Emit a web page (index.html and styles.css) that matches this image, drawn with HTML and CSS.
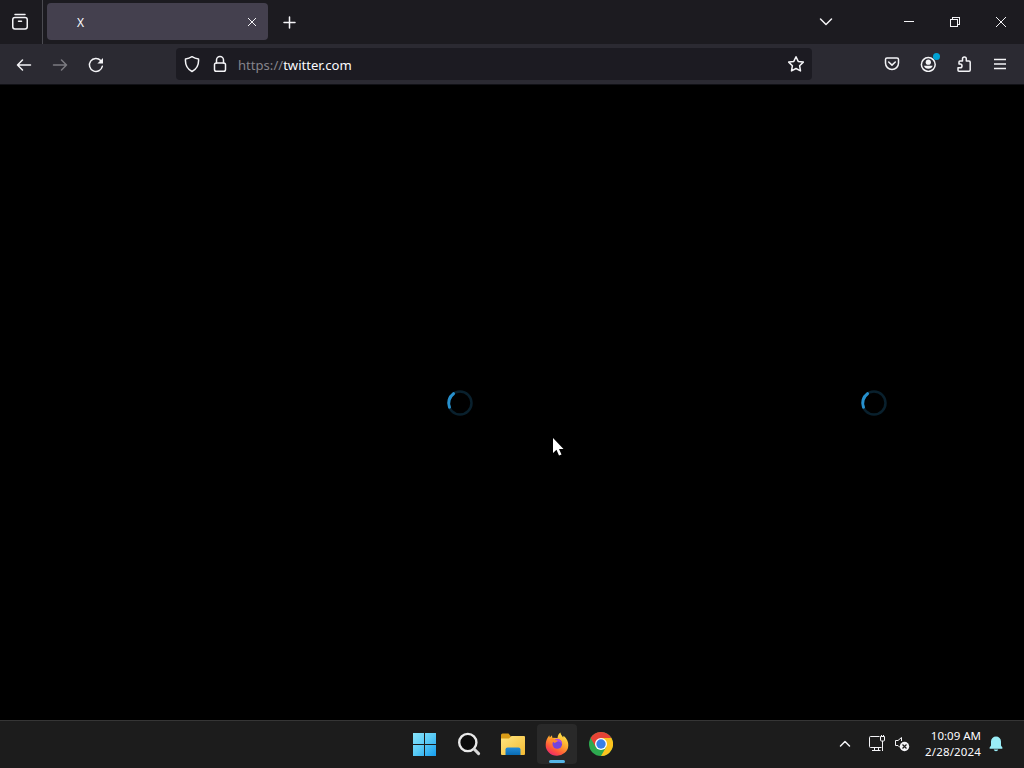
FILE: index.html
```html
<!DOCTYPE html>
<html lang="en">
<head>
<meta charset="utf-8">
<title>X</title>
<link rel="stylesheet" href="styles.css">
</head>
<body>
<div class="desktop">
  <header class="tabbar">
    <div class="view-button"><svg class="line" width="18" height="18" viewBox="0 0 18 18"><path d="M4 1.500h10"/><rect x="1.750" y="4.500" width="14.500" height="11.500" rx="2.200"/><path d="M7.500 8.200h3"/></svg></div>
    <div class="tab"><span class="tab-title">X</span><svg class="thin" width="10" height="10" viewBox="0 0 10 10"><path d="M1 1l8 8M9 1L1 9"/></svg></div>
    <div class="new-tab"><svg class="line" width="13" height="13" viewBox="0 0 13 13"><path d="M6.500 1v11M1 6.500h11"/></svg></div>
    <div class="spacer"></div>
    <div class="all-tabs"><svg class="line" width="14" height="10" viewBox="0 0 14 10"><path d="M1.500 2L7 7.500 12.500 2"/></svg></div>
    <div class="win"><svg class="crisp" width="10" height="10" viewBox="0 0 10 10"><path d="M0 4.500h10"/></svg></div>
    <div class="win"><svg class="crisp" width="10" height="10" viewBox="0 0 10 10"><path d="M.5 2.500h7v7h-7zM2.500 2.500v-2h7v7h-2"/></svg></div>
    <div class="win"><svg class="thin" width="10" height="10" viewBox="0 0 10 10"><path d="M0 0l10 10M10 0L0 10"/></svg></div>
  </header>
  <nav class="toolbar">
    <div class="tool"><svg class="line" width="16" height="16" viewBox="0 0 16 16"><path d="M14.500 8H1.500M6.500 3L1.500 8l5 5"/></svg></div>
    <div class="tool muted"><svg class="line" width="16" height="16" viewBox="0 0 16 16"><path d="M1.500 8h13M9.500 3l5 5-5 5"/></svg></div>
    <div class="tool"><svg class="line" width="16" height="16" viewBox="0 0 16 16"><path d="M14.300 9.300A6.500 6.500 0 1 1 12.700 3.500"/><path class="fill" d="M15 1v5.600H9.400z"/></svg></div>
    <div class="urlbar">
      <svg class="line shield" width="16" height="18" viewBox="0 0 16 18"><path d="M8 1.700C6 3 3.800 3.700 1.500 3.900C1 9.700 3.300 14.200 8 16.500C12.700 14.200 15 9.700 14.500 3.900C12.200 3.700 10 3 8 1.700z"/></svg>
      <svg class="line lock" width="14" height="18" viewBox="0 0 14 18"><rect x="1.500" y="8" width="11" height="8.200" rx="1.800"/><path d="M3.500 8V5a3.500 3.500 0 0 1 7 0v3"/></svg>
      <span class="url"><span class="scheme">https://</span>twitter.com</span>
      <svg class="line star" width="18" height="18" viewBox="0 0 18 18"><path d="M9 1.700l2.200 4.700 5.100.7-3.700 3.600.9 5.200L9 13.500l-4.500 2.400.9-5.200L1.700 7.100l5.100-.7z"/></svg>
    </div>
    <div class="actions">
      <div class="tool"><svg class="line" width="16" height="16" viewBox="0 0 16 16"><path d="M3 2h10q1.500 0 1.500 1.500V7a6.500 6.500 0 0 1-13 0V3.500Q1.500 2 3 2zM4.700 6L8 9.100 11.300 6"/></svg></div>
      <div class="tool account"><svg class="line" width="16" height="16" viewBox="0 0 16 16"><circle cx="8.300" cy="8.500" r="6.900"/><circle class="solid" cx="8.300" cy="6.200" r="2.600"/><path class="solid" d="M3.900 9.800h8.800a4.600 4.200 0 0 1-8.800 0z"/></svg><span class="badge"></span></div>
      <div class="tool"><svg class="line" width="16" height="18" viewBox="0 0 16 18"><path d="M3 16.200q-1 0-1-1V12.700h2.200a1.800 1.800 0 0 0 0-3.600H3V7q0-1 1-1h2.500V3.800a1.900 1.900 0 0 1 3.800 0V6h2.700q1.200 0 1.200 1.200v7.800q0 1.200-1.200 1.200z"/></svg></div>
      <div class="tool"><svg class="line menu" width="14" height="14" viewBox="0 0 14 14"><path d="M1 2.500h12M1 7h12M1 11.500h12"/></svg></div>
    </div>
  </nav>
  <main class="page">
    <div class="primary"><svg class="spinner" width="28" height="28" viewBox="0 0 28 28"><circle class="track" cx="14" cy="14" r="11.500"/><path class="arc" d="M7.500 4.700A11.500 11.500 0 0 0 3.500 18.200"/></svg></div>
    <div class="secondary"><svg class="spinner" width="28" height="28" viewBox="0 0 28 28"><circle class="track" cx="14" cy="14" r="11.500"/><path class="arc" d="M7.500 4.700A11.500 11.500 0 0 0 3.500 18.200"/></svg></div>
  </main>
  <footer class="taskbar">
    <div class="side"></div>
    <div class="apps">
      <div class="app start"><svg width="24" height="24" viewBox="0 0 24 24"><defs><linearGradient id="win" gradientUnits="userSpaceOnUse" x1="0" y1="0" x2="24" y2="24"><stop stop-color="#8be6fb"/><stop offset=".5" stop-color="#5bcbf5"/><stop offset="1" stop-color="#149df0"/></linearGradient></defs><path fill="url(#win)" d="M1 1h11v11H1zM13 1h11v11H13zM1 13h11v11H1zM13 13h11v11H13z"/></svg></div>
      <div class="app"><svg width="24" height="24" viewBox="0 0 24 24" fill="none"><circle cx="10.800" cy="10.500" r="8.600" fill="#0c0c0c" stroke="#e9e9e9" stroke-width="2.400"/><path d="M17.300 17.200l4.300 4.400" stroke="#d8d8d8" stroke-width="3" stroke-linecap="round"/></svg></div>
      <div class="app"><svg width="26" height="24" viewBox="0 0 26 24"><defs><linearGradient id="folder" x2="1" y2="1"><stop stop-color="#ffe681"/><stop offset="1" stop-color="#f4ba32"/></linearGradient><linearGradient id="pocket" x2="0" y2="1"><stop stop-color="#258bd8"/><stop offset="1" stop-color="#086cb4"/></linearGradient></defs><path fill="#d99b16" d="M1 3q0-1.500 1.500-1.500h6L11 4.500v5H1z"/><path fill="url(#folder)" d="M1 6.500h8l2.500-2.500H24q1 0 1 1v17q0 1-1 1H2q-1 0-1-1z"/><path fill="url(#pocket)" d="M5.500 23v-5.500q0-2 2-2h11q2 0 2 2V23z"/></svg></div>
      <div class="app active"><svg width="24" height="24" viewBox="0 0 24 24"><defs><linearGradient id="fox" x1=".8" y1="0" x2=".2" y2="1"><stop stop-color="#fff04b"/><stop offset=".45" stop-color="#ffa02c"/><stop offset=".75" stop-color="#ff523d"/><stop offset="1" stop-color="#e72278"/></linearGradient></defs><path fill="url(#fox)" d="M15.500.500c0 2.200 1.700 3 2.600 5l.5-1.700c3.500 2.800 4.900 6.300 4.700 9.700A11.300 10.500 0 0 1 .7 13C.600 9 2 6 4.300 3.200l.5 2.300L7 3.300l.3 2.500 5.200.2C12.800 3.600 13.600 1.800 15.500.500z"/><circle cx="12.300" cy="12" r="4.800" fill="#7544dd"/><path fill="#b34be0" d="M10 7.200a5 5 0 0 1 7 5c-1.500-2.500-3.500-3.100-5-2.300z"/><path fill="#ff8a2b" d="M4.500 7.500c2-1.900 4.200-1.500 5.500.5l2.700.5c-.3 1.500-2 1.500-3 2.500z"/></svg></div>
      <div class="app"><svg width="24" height="24" viewBox="0 0 24 24"><circle cx="12" cy="12" r="12" fill="#2da94f"/><path fill="#e74335" d="M1.600 6A12 12 0 0 1 22.400 6H12v6l-5.200 3z"/><path fill="#fcc31e" d="M22.400 6A12 12 0 0 1 12 24l5.200-9L12 6z"/><circle cx="12" cy="12" r="6" fill="#fff"/><circle cx="12" cy="12" r="4.700" fill="#377fe8"/></svg></div>
    </div>
    <div class="side tray">
      <svg class="line caret" width="12" height="8" viewBox="0 0 12 8"><path d="M1.500 6L6 1.500 10.500 6"/></svg>
      <svg class="thin network" width="17" height="17" viewBox="0 0 17 17"><path d="M10.500 1.500H1.500q-1 0-1 1v9q0 1 1 1h11M5.500 12.500v3M3 15.500h8.500M9.500 12.500v3M11.500 1.500h4v3.500q0 1-1 1h-2q-1 0-1-1zM12.500 0v1.500M14.500 0v1.500M13.500 6v10"/></svg>
      <svg class="thin volume" width="16" height="16" viewBox="0 0 16 16"><path d="M7.500 5V1.500L4 4.500H1.500v5H4l2 2"/><circle class="solid" cx="10.500" cy="10.500" r="4.700"/><path class="cross" d="M8.500 8.500l4 4M12.500 8.500l-4 4"/></svg>
      <div class="clock"><span>10:09 AM</span><span class="date">2/28/2024</span></div>
      <svg class="bell" width="14" height="16" viewBox="0 0 14 16"><path fill="#9aedf7" d="M7 .5a5 5 0 0 1 5 5v4l1.500 2.300q.3 1-.8 1H1.300q-1.100 0-.8-1L2 9.500v-4a5 5 0 0 1 5-5zM4.700 13.500h4.600a2.400 2.400 0 0 1-4.600 0z"/></svg>
    </div>
  </footer>
  <svg class="pointer" width="12" height="19" viewBox="0 0 12 19"><path fill="#fff" d="M1 0v15l3.500-3.200L7 17.500l2.500-1.100L7 11h4.500z"/></svg>
</div>
</body>
</html>
```

FILE: styles.css
```css
* { box-sizing: border-box; }
body { margin: 0; background: #000; font-family: "Noto Sans", sans-serif; color: #fbfbfe; }
svg { display: block; flex: none; }
.desktop { width: 1024px; height: 768px; display: flex; flex-direction: column; position: relative; overflow: hidden; }
.line, .thin, .crisp { fill: none; stroke: #f4f4f7; stroke-width: 1.5; stroke-linecap: round; stroke-linejoin: round; }
.thin, .crisp { stroke-width: 1; stroke-linecap: butt; }
.crisp { shape-rendering: crispEdges; stroke-linejoin: miter; }
.fill { fill: #f4f4f7; stroke: none; }
.solid { fill: #f4f4f7; stroke: none; }
.cross { stroke: #1c1c1c; stroke-width: 1.2; }
.tabbar { height: 44px; background: #1c1b20; display: flex; align-items: center; }
.view-button { width: 43px; height: 44px; padding-right: 3px; border-right: 1px solid #4b4b51; display: flex; align-items: center; justify-content: center; }
.tab { width: 221px; height: 37px; margin: 0 0 1px 4px; border-radius: 4px; background: #44404e; display: flex; align-items: center; justify-content: space-between; padding: 0 11px 0 30px; }
.tab-title { font-size: 12px; line-height: 16px; padding-top: 2px; }
.new-tab { width: 43px; display: flex; justify-content: center; padding-top: 1px; }
.spacer { flex: 1; }
.all-tabs { margin-right: 53px; }
.win { width: 46px; height: 44px; display: flex; align-items: center; justify-content: center; }
.toolbar { height: 41px; background: #2b2a32; border-bottom: 1px solid #111116; display: flex; align-items: center; padding: 1px 6px 0; }
.tool { width: 36px; height: 36px; display: flex; align-items: center; justify-content: center; }
.muted { opacity: .4; }
.actions { display: flex; margin-bottom: 2px; }
.urlbar { width: 636px; height: 32px; margin: 0 auto 1px 62px; border-radius: 4px; background: #1c1b22; display: flex; align-items: center; padding: 0 7px 0 8px; }
.lock { margin-left: 13px; }
.url { flex: 1; margin-left: 11px; font-size: 13.1px; line-height: 18px; padding-top: 1px; }
.scheme { color: #85848b; }
.account { position: relative; }
.badge { position: absolute; left: 23px; top: 7px; width: 7px; height: 7px; border-radius: 50%; background: #00a2d3; }
.menu { stroke-linecap: butt; }
.page { flex: 1; display: flex; background: #000; align-items: center; }
.primary { width: 667px; padding-left: 253px; display: flex; justify-content: center; }
.secondary { flex: 1; display: flex; padding-left: 193px; }
.spinner { fill: none; stroke-width: 2.5; stroke-linecap: round; }
.track { stroke: #09202d; }
.arc { stroke: #2790cd; stroke-width: 3; }
.taskbar { height: 48px; background: #1c1c1c; border-top: 1px solid #353535; display: flex; align-items: center; padding-bottom: 2px; }
.side { width: 402px; }
.apps { display: flex; gap: 4px; width: 221px; padding-left: 3px; }
.app { width: 40px; height: 40px; display: flex; align-items: center; justify-content: center; border-radius: 4px; }
.start { padding-right: 2px; }
.active { position: relative; background: #292929; }
.active::after { content: ""; position: absolute; left: 12px; bottom: 1px; width: 16px; height: 3px; border-radius: 2px; background: #55b5e6; }
.tray { flex: 1; display: flex; align-items: center; justify-content: flex-end; padding-right: 21px; }
.caret { margin-right: 18px; }
.network { margin-right: 8px; }
.volume { margin-right: 15px; }
.clock { display: flex; flex-direction: column; align-items: flex-end; font-size: 11.5px; line-height: 16px; white-space: nowrap; }
.date { letter-spacing: .15px; }
.bell { margin-left: 8px; }
.pointer { position: absolute; left: 552px; top: 438px; }
```
